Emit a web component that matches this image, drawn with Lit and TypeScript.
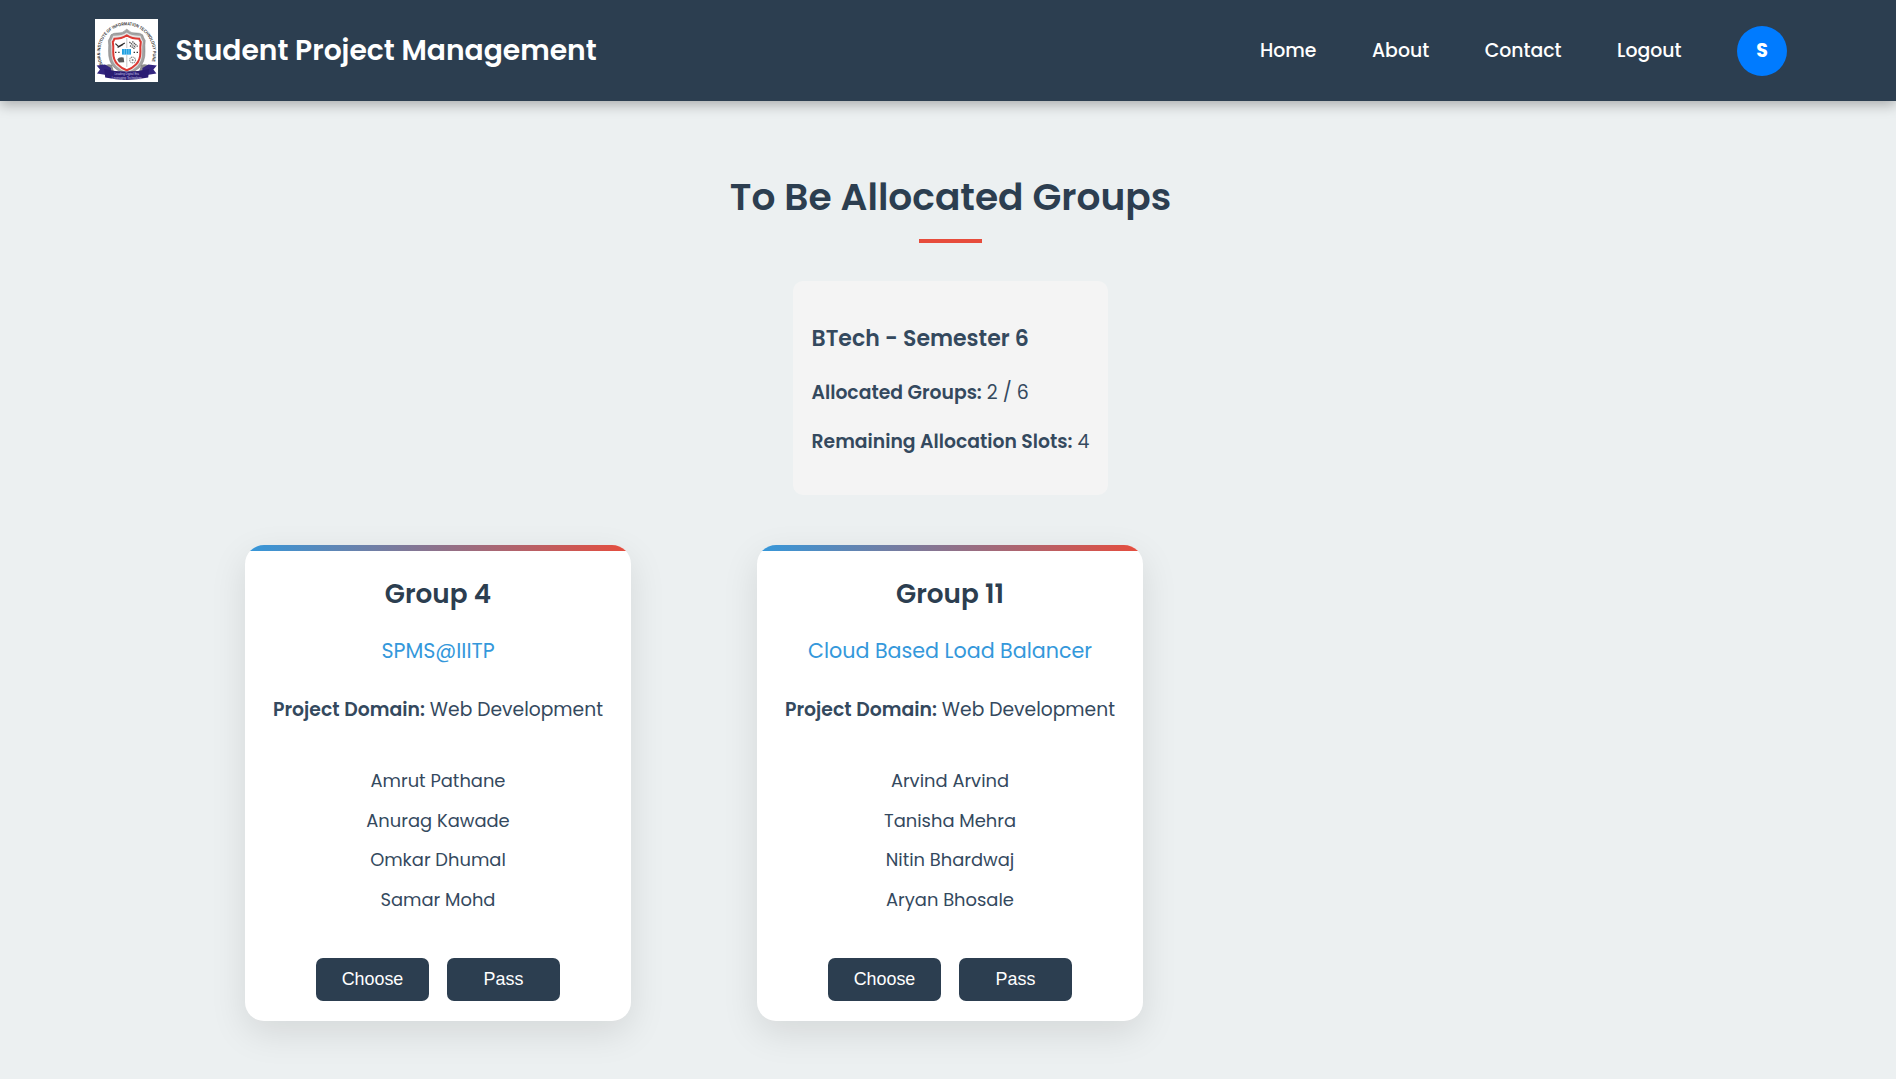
import { LitElement, html, css, svg } from "lit";
import { customElement, property } from "lit/decorators.js";

interface Group {
  name: string;
  project: string;
  domain: string;
  members: string[];
}

const NAV = ["Home", "About", "Contact", "Logout"];

const GROUPS: Group[] = [
  {
    name: "Group 4",
    project: "SPMS@IIITP",
    domain: "Web Development",
    members: ["Amrut Pathane", "Anurag Kawade", "Omkar Dhumal", "Samar Mohd"],
  },
  {
    name: "Group 11",
    project: "Cloud Based Load Balancer",
    domain: "Web Development",
    members: ["Arvind Arvind", "Tanisha Mehra", "Nitin Bhardwaj", "Aryan Bhosale"],
  },
];

const crest = svg`
  <svg class="crest" viewBox="0 0 63 63" width="63" height="63" aria-hidden="true">
    <rect width="63" height="63" fill="#fff"/>
    <defs><path id="ring" d="M7.9 46 A26.5 27.5 0 1 1 55.3 46"/></defs>
    <text font-family="Liberation Sans, sans-serif" font-size="4.4" font-weight="700" fill="#333">
      <textPath href="#ring" textLength="106" lengthAdjust="spacingAndGlyphs">INDIAN INSTITUTE OF INFORMATION TECHNOLOGY PUNE</textPath>
    </text>
    <path d="M8 48 Q12 44 17 46 L19 53 L8 51Z M56 48 Q52 44 46 46 L44 53 L56 51Z" fill="#8d8d8d"/>
    <path d="M31.8 10.2 Q36 14.6 41 14 Q45 13.8 47.6 15.8 Q48.6 19 50.2 21.4 Q49.6 26 50 32 Q50.4 43 44 49 Q39 53.5 31.8 56 Q24.6 53.5 19.6 49 Q13.2 43 13.6 32 Q14 26 13.4 21.4 Q15 19 16 15.8 Q18.6 13.8 22.6 14 Q27.6 14.6 31.8 10.2Z" fill="#a2a2a2" stroke="#777" stroke-width=".5"/>
    <path d="M31.8 13.6 Q37 17.2 45.4 16.8 Q46.4 20 48 22.4 Q46.8 27 47.2 33 Q47.4 42 42.4 46.9 Q38.4 51 31.8 53.2 Q25.2 51 21.2 46.9 Q16.2 42 16.4 33 Q16.8 27 15.6 22.4 Q17.2 20 18.2 16.8 Q26.6 17.2 31.8 13.6Z" fill="#e4e4e4"/>
    <path d="M31.8 16.4 Q37 19.8 44.2 19.8 Q44.8 21.8 45.8 23 Q45 27 45.4 33 Q45.4 41 41 45.4 Q37.4 49.2 31.8 51.2 Q26.2 49.2 22.6 45.4 Q18.2 41 18.2 33 Q18.6 27 17.8 23 Q18.8 21.8 19.4 19.8 Q26.6 19.8 31.8 16.4Z" fill="#fff" stroke="#dc3a34" stroke-width="2"/>
    <path d="M31.8 19v10 M31.8 36v12" stroke="#b9b9b9" stroke-width=".8"/>
    <path d="M20.4 24.6 L23.6 27.6 L29.8 24 M22.6 28.6 L28 25.6" stroke="#2b2b2b" stroke-width="1.2" fill="none"/>
    <path d="M34.4 23 L40.6 28.4 M37.4 22.6 L42.6 27.4 M35 26.6 L40 30" stroke="#555" stroke-width="1.3" stroke-dasharray="1.4 .6" fill="none"/>
    <rect x="27" y="30" width="9" height="5.6" fill="#20a0e0"/>
    <path d="M29.3 30v5.6 M31.6 30v5.6 M33.9 30v5.6" stroke="#bfe6fa" stroke-width=".5"/>
    <path d="M20 33.4h1.4 M23.2 33.4h1.4 M38.6 33.4h1.4 M41.6 33.4h1.4" stroke="#333" stroke-width="1.2"/>
    <path d="M22.2 40.4 Q24 37.4 28.6 38.6 L29.2 43.2 L24 43.6Z" fill="#5a5a5a"/>
    <circle cx="37.6" cy="41" r="2.9" fill="none" stroke="#8a8a8a" stroke-width="1.1" stroke-dasharray="1.3 .6"/>
    <circle cx="37.6" cy="41" r="1" fill="#888"/>
    <path d="M1.6 46.4 L10 45.4 L16 49 L16 56.8 L2 54.4 L5 50.4Z M61.8 46.4 L53.4 45.4 L47.4 49 L47.4 56.8 L61.4 54.4 L58.4 50.4Z" fill="#33267f"/>
    <path d="M9.2 50 Q31 55 54.2 50 L53.2 58.6 Q31 63.4 10.2 58.6Z" fill="#2a1c73"/>
    <text x="31.7" y="56" text-anchor="middle" font-family="Liberation Sans, sans-serif" font-size="2.9" fill="#c5c1e4">Leading Digital Era</text>
    <text x="31.7" y="59.6" text-anchor="middle" font-family="Liberation Sans, sans-serif" font-size="2.9" fill="#c5c1e4">Leveraging Technology</text>
  </svg>`;

@customElement("group-card")
export class GroupCard extends LitElement {
  @property({ attribute: false }) group!: Group;

  static styles = css`
    :host {
      display: flex;
      flex-direction: column;
      align-items: center;
      box-sizing: border-box;
      height: 476px;
      border-radius: 19px;
      overflow: hidden;
      background: #fff;
      box-shadow: 0 12px 36px rgba(0, 0, 0, 0.1);
      color: #34495e;
    }
    .bar {
      width: 100%;
      height: 6px;
      background: linear-gradient(to right, #3498db, #e74c3c);
    }
    .name {
      margin: 27px 0 0;
      font-size: 26.25px;
      line-height: 32px;
      font-weight: 600;
      color: #2c3e50;
    }
    .project {
      margin: 26.5px 0 0;
      font-size: 20.65px;
      line-height: 28px;
      color: #3498db;
    }
    .domain {
      margin: 32.5px 0 0;
      font-size: 18.7px;
      line-height: 26px;
    }
    .domain strong {
      font-size: 18.85px;
      font-weight: 600;
    }
    .members {
      list-style: none;
      margin: 38px 0 0;
      padding: 0;
      font-size: 17.9px;
      line-height: 39.6px;
      text-align: center;
    }
    .actions {
      display: flex;
      gap: 18px;
      margin-top: 38.6px;
    }
    .action {
      width: 113px;
      height: 43px;
      padding: 0;
      border: 0;
      border-radius: 7px;
      background: #2c3e50;
      color: #fff;
      font: 17.9px "Liberation Sans", Arial, sans-serif;
    }
  `;

  render() {
    const { name, project, domain, members } = this.group;
    return html`
      <div class="bar"></div>
      <h3 class="name">${name}</h3>
      <p class="project">${project}</p>
      <p class="domain"><strong>Project Domain:</strong> ${domain}</p>
      <ul class="members">
        ${members.map((m) => html`<li>${m}</li>`)}
      </ul>
      <div class="actions">
        <button class="action">Choose</button>
        <button class="action">Pass</button>
      </div>
    `;
  }
}

@customElement("app-root")
export class AppRoot extends LitElement {
  static styles = css`
    :host {
      display: block;
      box-sizing: border-box;
      height: 1079px;
      overflow: hidden;
      background: #ecf0f1;
      font-family: Poppins, Inter, "Open Sans", sans-serif;
      color: #34495e;
    }
    .header {
      position: relative;
      display: flex;
      align-items: center;
      box-sizing: border-box;
      height: 101px;
      padding: 0 109px 0 95px;
      background: #2c3e50;
      color: #fff;
      box-shadow: 0 4px 12px rgba(0, 0, 0, 0.28);
    }
    .crest {
      display: block;
    }
    .brand {
      margin: 0 auto 0 17.6px;
      padding-bottom: 1px;
      font-size: 28.2px;
      line-height: 36px;
      font-weight: 600;
    }
    .nav {
      display: flex;
      align-items: center;
      gap: 55.5px;
      font-size: 18.85px;
      line-height: 24px;
      font-weight: 500;
    }
    .avatar {
      display: grid;
      place-items: center;
      width: 50px;
      height: 50px;
      border-radius: 50%;
      background: #007bff;
      font-weight: 700;
      font-size: 18.9px;
    }
    .main {
      display: flex;
      flex-direction: column;
      align-items: center;
      padding: 74px 0 0 5px;
    }
    .title {
      margin: 0;
      font-size: 37.55px;
      line-height: 44px;
      font-weight: 600;
      color: #2c3e50;
    }
    .rule {
      width: 63px;
      height: 4px;
      margin-top: 20px;
      background: #e74c3c;
    }
    .summary {
      box-sizing: border-box;
      width: 315px;
      height: 214px;
      margin-top: 38px;
      padding: 43px 0 0 18.5px;
      border-radius: 10px;
      background: #f4f4f4;
    }
    .summary strong {
      font-size: 18.8px;
      font-weight: 600;
    }
    .term {
      margin: 0 0 25px;
      font-size: 22px;
      line-height: 30px;
      font-weight: 600;
    }
    .stat {
      margin: 0 0 21px;
      font-size: 18.9px;
      line-height: 28px;
    }
    .cards {
      display: grid;
      grid-template-columns: repeat(3, 386px);
      column-gap: 126px;
      margin: 50px 1px 0 0;
    }
  `;

  render() {
    return html`
      <header class="header">
        ${crest}
        <h1 class="brand">Student Project Management</h1>
        <nav class="nav">
          ${NAV.map((item) => html`<span>${item}</span>`)}
          <span class="avatar">S</span>
        </nav>
      </header>
      <main class="main">
        <h2 class="title">To Be Allocated Groups</h2>
        <div class="rule"></div>
        <section class="summary">
          <h3 class="term">BTech - Semester 6</h3>
          <p class="stat"><strong>Allocated Groups:</strong> 2 / 6</p>
          <p class="stat"><strong>Remaining Allocation Slots:</strong> 4</p>
        </section>
        <section class="cards">
          ${GROUPS.map((g) => html`<group-card .group=${g}></group-card>`)}
        </section>
      </main>
    `;
  }
}
